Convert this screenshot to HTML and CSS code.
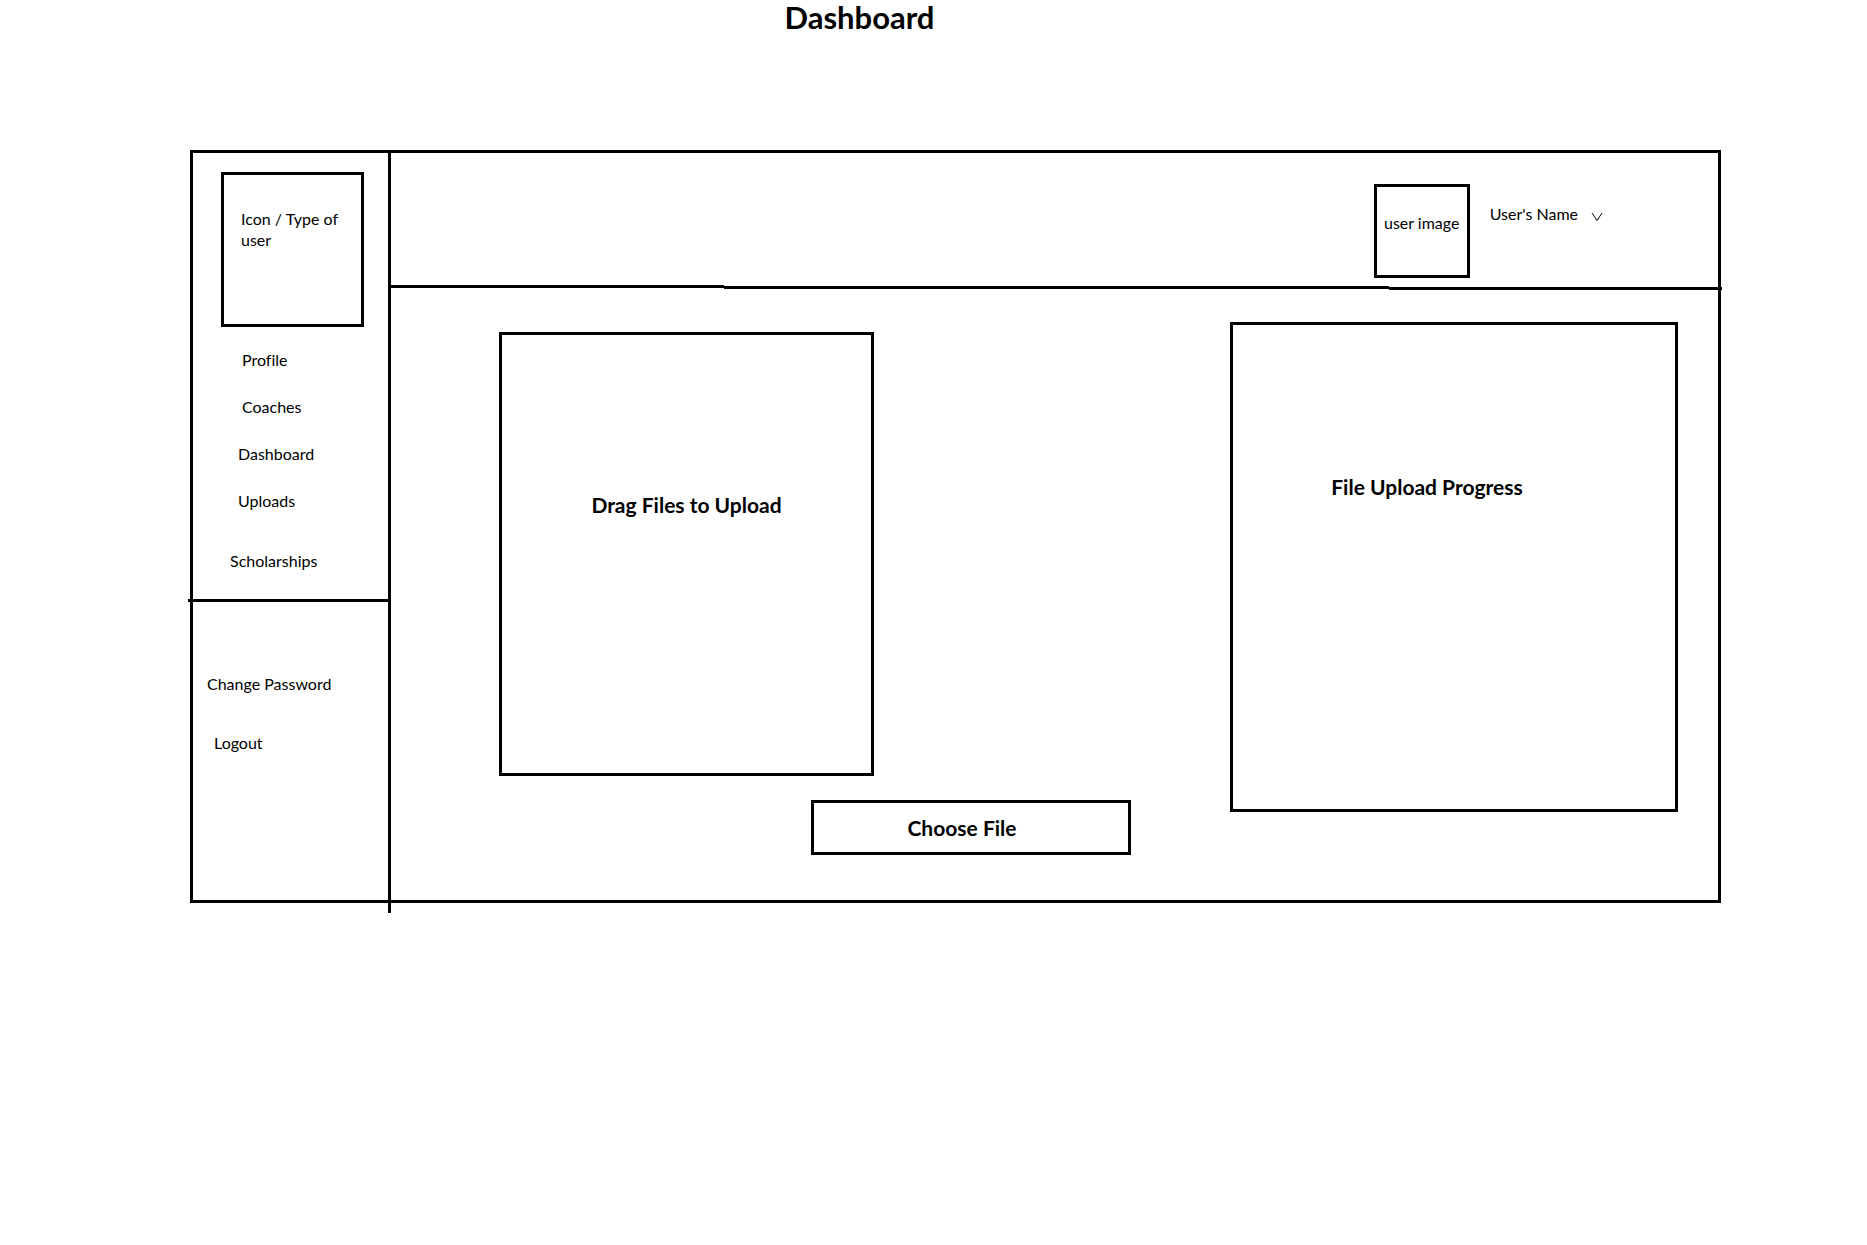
FILE: index.html
```
<!DOCTYPE html>
<html lang="en">
<head>
<meta charset="utf-8">
<meta name="viewport" content="width=device-width, initial-scale=1">
<title>Dashboard</title>
<link rel="stylesheet" href="styles.css">
</head>
<body>
<h1 class="page-title">Dashboard</h1>
<div class="frame">
  <aside class="sidebar">
    <div class="user-type">Icon / Type of user</div>
    <nav class="nav">
      <a class="indent-wide" href="#profile">Profile</a>
      <a class="indent-wide" href="#coaches">Coaches</a>
      <a class="indent-mid" href="#dashboard">Dashboard</a>
      <a class="indent-mid" href="#uploads">Uploads</a>
      <a class="nav-last" href="#scholarships">Scholarships</a>
    </nav>
    <hr class="divider">
    <nav class="account">
      <a class="account-password" href="#password">Change Password</a>
      <a class="account-logout" href="#logout">Logout</a>
    </nav>
  </aside>
  <div class="content">
    <header class="topbar">
      <div class="user-image">user image</div>
      <button class="user-menu" type="button">User's Name
        <svg class="chevron" width="12" height="10" viewBox="0 0 12 10" aria-hidden="true"><path d="M1 1 L6 8.500 L11 1" fill="none" stroke="#000" stroke-width="1"/></svg>
      </button>
    </header>
    <div class="rule"><span></span><span></span><span></span></div>
    <main class="uploads">
      <section class="drop-zone"><h2>Drag Files to Upload</h2></section>
      <button class="choose-file" type="button">Choose File</button>
      <section class="progress"><h2>File Upload Progress</h2></section>
    </main>
  </div>
</div>
</body>
</html>
```
FILE: styles.css
```
* {
  box-sizing: border-box;
}

body {
  min-height: 100vh;
  margin: 0;
  background: #fff;
  color: #000;
  font-family: Lato, "Liberation Sans", sans-serif;
  font-size: 16px;
  font-variant-ligatures: none;
  line-height: 21px;
}

a {
  color: inherit;
  text-decoration: none;
}

button {
  margin: 0;
  background: none;
  color: inherit;
  font: inherit;
  cursor: pointer;
}

h2 {
  margin: 0;
  font-size: 21px;
  line-height: 24px;
}

.page-title {
  margin: 0;
  padding-right: 148px;
  font-size: 31px;
  line-height: 34px;
  text-align: center;
}

.frame {
  display: grid;
  grid-template-columns: 198px minmax(0, 1fr);
  margin: 116px 146px 0 190px;
  border: 3px solid #000;
}

.sidebar {
  position: relative;
  padding-top: 19px;
}

/* The sidebar's edge runs a little past the frame */
.sidebar::after {
  content: "";
  position: absolute;
  top: 0;
  right: 0;
  bottom: -13px;
  width: 3px;
  background: #000;
}

.user-type {
  width: 143px;
  height: 155px;
  margin-left: 28px;
  padding: 33px 16px 0 17px;
  border: 3px solid #000;
}

.nav,
.account {
  display: flex;
  flex-direction: column;
}

.nav {
  gap: 26px;
  padding: 22px 0 28px;
}

.indent-wide {
  padding-left: 49px;
}

.indent-mid {
  padding-left: 45px;
}

.nav-last {
  margin-top: 13px;
  padding-left: 37px;
}

.divider {
  height: 3px;
  margin: 0 0 0 -5px;
  border: 0;
  background: #000;
}

.account {
  gap: 38px;
  padding-top: 71px;
}

.account-password {
  padding-left: 14px;
}

.account-logout {
  padding-left: 21px;
}

.topbar {
  display: flex;
  justify-content: flex-end;
  align-items: flex-start;
  gap: 20px;
  height: 132px;
  padding: 31px 115px 0 0;
}

.user-image {
  width: 96px;
  height: 94px;
  padding-top: 25px;
  border: 3px solid #000;
  text-align: center;
  white-space: nowrap;
}

.user-menu {
  display: flex;
  align-items: center;
  gap: 13px;
  margin-top: 19px;
  padding: 0;
  border: 0;
}

.chevron {
  margin-top: 6px;
}

/* Header rule, drawn in three strokes that step down */
.rule {
  display: grid;
  grid-template-columns: 1fr 2fr 1fr;
  height: 5px;
  margin-right: -4px;
}

.rule span {
  height: 3px;
  background: #000;
}

.rule span:nth-child(2) {
  margin-top: 1px;
}

.rule span:nth-child(3) {
  margin-top: 2px;
}

.uploads {
  display: grid;
  grid-template-columns: 312fr 63fr 257fr 99fr 448fr;
  grid-template-rows: auto auto;
  row-gap: 24px;
  padding: 32px 40px 45px 108px;
}

.drop-zone,
.progress,
.choose-file {
  border: 3px solid #000;
  text-align: center;
}

.drop-zone {
  grid-area: 1 / 1 / 2 / 3;
  min-height: 444px;
  margin-top: 10px;
  padding-top: 158px;
}

.progress {
  grid-area: 1 / 5 / 3 / 6;
  margin-bottom: 43px;
  padding: 150px 54px 0 0;
}

.choose-file {
  grid-area: 2 / 2 / 3 / 4;
  height: 55px;
  padding: 0 18px 0 0;
  font-size: 21px;
  font-weight: 700;
  line-height: 24px;
}
```
